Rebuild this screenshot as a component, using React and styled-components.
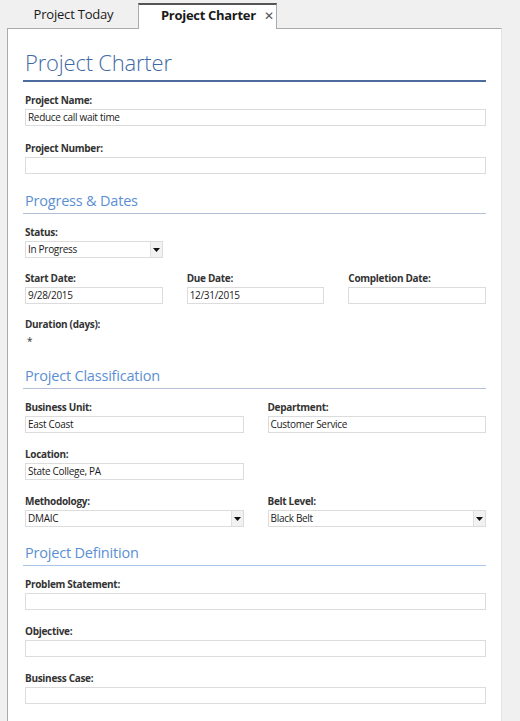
import React from "react"
import styled, { createGlobalStyle } from "styled-components"

const GlobalStyle = createGlobalStyle`
  html, body {
    margin: 0;
    padding: 0;
    background: #f0f0f0;
    font-family: "Open Sans", "Noto Sans", Arial, sans-serif;
  }
`

const Page = styled.div`
  width: 520px;
  height: 721px;
  overflow: hidden;
  background: #f0f0f0;
`

const TabBar = styled.div`
  display: flex;
  align-items: flex-end;
  height: 28px;
  padding-left: 9px;
`

const Tab = styled.div`
  box-sizing: border-box;
  display: flex;
  align-items: center;
  justify-content: ${(p) => (p.$active ? "flex-start" : "center")};
  gap: 8px;
  height: ${(p) => (p.$active ? "26px" : "24px")};
  width: ${(p) => (p.$active ? "139px" : "129px")};
  margin-bottom: ${(p) => (p.$active ? "-1px" : "0")};
  padding: ${(p) => (p.$active ? "0 0 4px 22px" : "0 0 4px 0")};
  font-size: 13px;
  font-weight: ${(p) => (p.$active ? 700 : 400)};
  letter-spacing: ${(p) => (p.$active ? "-0.3px" : "-0.2px")};
  color: #1a1a1a;
  background: ${(p) => (p.$active ? "#fff" : "transparent")};
  border-top: ${(p) => (p.$active ? "2px solid #555" : "none")};
  border-left: ${(p) => (p.$active ? "1px solid #aaa" : "none")};
  border-right: ${(p) => (p.$active ? "1px solid #aaa" : "none")};
  position: relative;
  z-index: 1;
`

const Close = styled.span`
  font-weight: 400;
  font-size: 12px;
  color: #555;
`

const Panel = styled.div`
  box-sizing: border-box;
  margin-left: 7px;
  width: 495px;
  height: 693px;
  background: #fff;
  border-left: 1px solid #aaa;
  border-top: 1px solid #aaa;
  border-right: 1px solid #e2e2e2;
  padding: 16px 15px 0 17px;
`

const Title = styled.h1`
  margin: 0 0 0 -2px;
  padding: 0 0 0 2px;
  height: 35px;
  font-size: 22px;
  font-weight: 300;
  letter-spacing: -0.2px;
  line-height: 34px;
  color: #3f6aa3;
  border-bottom: 2px solid #4d6b9f;
`

const Section = styled.h2`
  margin: ${(p) => p.$top} 0 0 -2px;
  padding: 0 0 0 2px;
  height: 23px;
  font-size: 14.5px;
  font-weight: 400;
  line-height: 22px;
  letter-spacing: -0.2px;
  color: #5b8fd3;
  border-bottom: 1px solid ${(p) => p.$line || "#b4c0d8"};
`

const Grid = styled.div`
  display: grid;
  grid-template-columns: repeat(${(p) => p.$cols}, 1fr);
  column-gap: 24px;
  row-gap: ${(p) => p.$gap || "15px"};
  margin-top: ${(p) => p.$top || "15px"};
`

const Field = styled.div`
  display: flex;
  flex-direction: column;
  gap: 2px;
  grid-column: ${(p) => p.$span || "auto"};
`

const Label = styled.label`
  display: block;
  height: 14px;
  font-size: 10px;
  line-height: 14px;
  font-weight: 700;
  letter-spacing: -0.3px;
  color: #333;
`

const Box = styled.div`
  box-sizing: border-box;
  display: flex;
  align-items: stretch;
  height: 17px;
  border: 1px solid #dcdcdc;
  font-size: 10px;
  line-height: 15px;
  letter-spacing: -0.3px;
  color: #1a1a1a;
  background: #fff;
`

const BoxText = styled.span`
  flex: 1;
  padding-left: 2px;
  white-space: nowrap;
`

const Arrow = styled.span`
  width: 11px;
  border-left: 1px solid #e0e0e0;
  background: #f2f2f2;
  display: flex;
  align-items: center;
  justify-content: center;
`

const Plain = styled.div`
  height: 17px;
  padding-left: 2px;
  font-size: 10px;
  line-height: 16px;
  color: #333;
`

function Input({ label, value, span }) {
  return (
    <Field $span={span}>
      <Label>{label}</Label>
      <Box>
        <BoxText>{value}</BoxText>
      </Box>
    </Field>
  )
}

function Select({ label, value, span }) {
  return (
    <Field $span={span}>
      <Label>{label}</Label>
      <Box>
        <BoxText>{value}</BoxText>
        <Arrow>
          <svg width="7" height="4" viewBox="0 0 7 4">
            <path d="M0 0h7L3.5 4z" fill="#111" />
          </svg>
        </Arrow>
      </Box>
    </Field>
  )
}

export default function App() {
  return (
    <Page>
      <GlobalStyle />
      <TabBar>
        <Tab>Project Today</Tab>
        <Tab $active>
          Project Charter <Close>✕</Close>
        </Tab>
      </TabBar>
      <Panel>
        <Title>Project Charter</Title>
        <Grid $cols={1} $top="11px">
          <Input label="Project Name:" value="Reduce call wait time" />
          <Input label="Project Number:" value="" />
        </Grid>

        <Section $top="16px">Progress &amp; Dates</Section>
        <Grid $cols={3} $top="11px" $gap="13px">
          <Select label="Status:" value="In Progress" span="1 / 2" />
          <Input label="Start Date:" value="9/28/2015" span="1 / 2" />
          <Input label="Due Date:" value="12/31/2015" />
          <Input label="Completion Date:" value="" />
          <Field $span="1 / 2">
            <Label>Duration (days):</Label>
            <Plain>*</Plain>
          </Field>
        </Grid>

        <Section $top="15px">Project Classification</Section>
        <Grid $cols={2} $top="11px" $gap="14px">
          <Input label="Business Unit:" value="East Coast" />
          <Input label="Department:" value="Customer Service" />
          <Input label="Location:" value="State College, PA" span="1 / 2" />
          <Select label="Methodology:" value="DMAIC" span="1 / 2" />
          <Select label="Belt Level:" value="Black Belt" span="2 / 3" />
        </Grid>

        <Section $top="15px" $line="#a9c6e8">Project Definition</Section>
        <Grid $cols={1} $top="11px" $gap="14px">
          <Input label="Problem Statement:" value="" />
          <Input label="Objective:" value="" />
          <Input label="Business Case:" value="" />
        </Grid>
      </Panel>
    </Page>
  )
}
